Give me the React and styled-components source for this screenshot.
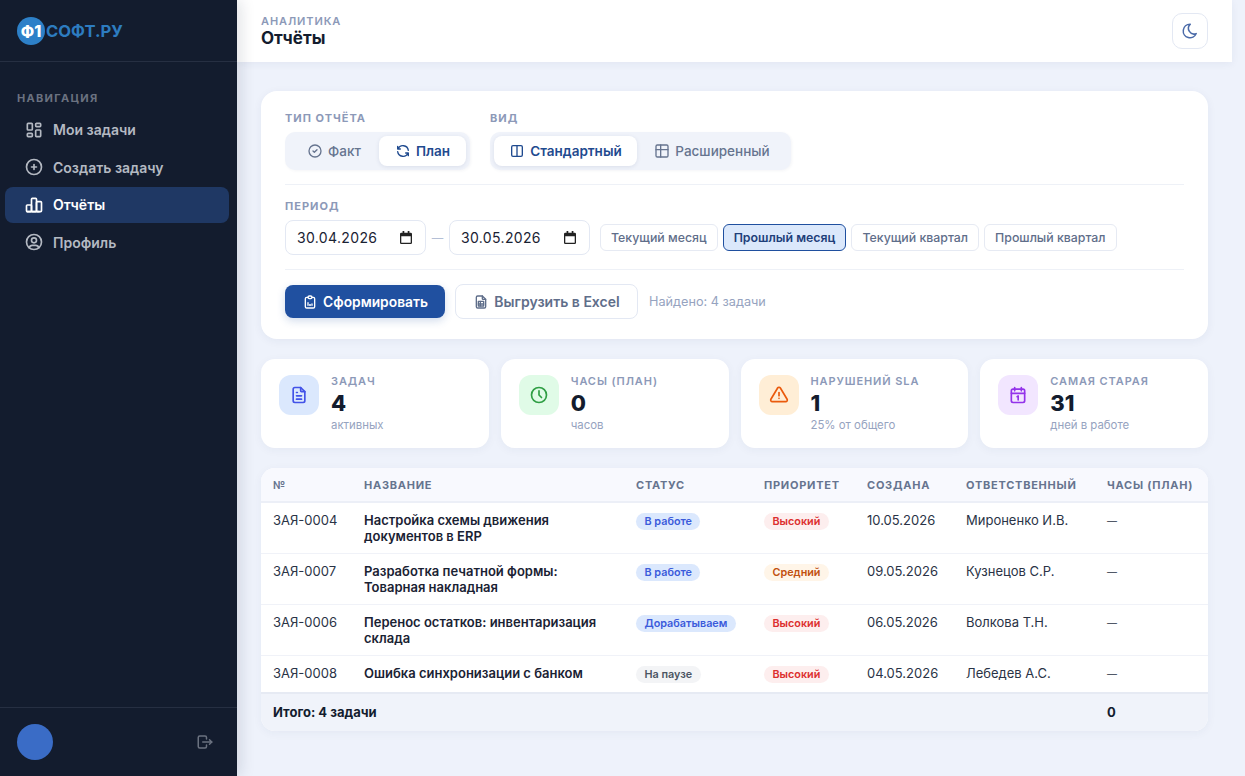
import React from "react";
import styled, { createGlobalStyle } from "styled-components";
import {
  TbLayoutDashboard,
  TbCirclePlus,
  TbChartBar,
  TbUserCircle,
  TbLogout,
  TbMoon,
  TbCircleCheck,
  TbRefresh,
  TbLayoutColumns,
  TbTable,
  TbClipboardData,
  TbFileSpreadsheet,
  TbFileText,
  TbClock,
  TbAlertTriangle,
} from "react-icons/tb";

const GlobalStyle = createGlobalStyle`
  html, body {
    margin: 0;
    height: 100%;
    overflow: hidden;
    background: #eef2fb;
  }
  body, button, input {
    font-family: Inter, "Noto Sans", sans-serif;
  }
`;

const Shell = styled.div`
  display: flex;
  height: 776px;
  padding-right: 13px;
  box-sizing: border-box;
`;

const Sidebar = styled.aside`
  flex: 0 0 237px;
  display: flex;
  flex-direction: column;
  background: #131c2e;
  box-shadow: 4px 0 14px rgba(19, 28, 46, 0.12);
  z-index: 2;
`;

const Brand = styled.div`
  height: 62px;
  box-sizing: border-box;
  display: flex;
  align-items: center;
  padding-left: 17px;
  border-bottom: 1px solid #262f42;
`;

const BrandMark = styled.span`
  width: 28px;
  height: 28px;
  border-radius: 50%;
  background: #2d80c8;
  color: #fff;
  font-size: 16px;
  font-weight: 800;
  display: flex;
  align-items: center;
  justify-content: center;
  margin-right: 1px;
`;

const BrandName = styled.span`
  color: #2d7cc0;
  font-size: 16.6px;
  font-weight: 700;
`;

const NavSection = styled.div`
  color: #6b7280;
  font-size: 11px;
  font-weight: 700;
  letter-spacing: 1.3px;
  padding: 29px 17px 6.5px;
  line-height: 14px;
`;

const NavList = styled.nav`
  display: flex;
  flex-direction: column;
  gap: 1.5px;
  padding: 0 8px 0 5px;
`;

const NavItem = styled.a`
  height: 36px;
  display: flex;
  align-items: center;
  gap: 9.5px;
  padding-left: 20px;
  border-radius: 8px;
  font-size: 14px;
  font-weight: 600;
  color: ${(p) => (p.$active ? "#ffffff" : "#b4b9c2")};
  background: ${(p) => (p.$active ? "#1f3864" : "transparent")};
  svg {
    font-size: 20px;
    flex: none;
    margin-left: -1.5px;
  }
`;

const SidebarFooter = styled.div`
  margin-top: auto;
  height: 69px;
  box-sizing: border-box;
  border-top: 1px solid #262f42;
  display: flex;
  align-items: center;
  justify-content: space-between;
  padding: 0 23px 0 17px;
  color: #6b7280;
  font-size: 18px;
`;

const Avatar = styled.div`
  width: 36px;
  height: 36px;
  border-radius: 50%;
  background: #3a6cc6;
`;

const Main = styled.div`
  flex: 1;
  min-width: 0;
  display: flex;
  flex-direction: column;
`;

const Topbar = styled.header`
  height: 62px;
  box-sizing: border-box;
  background: #fff;
  box-shadow: 0 2px 8px rgba(30, 50, 100, 0.06);
  display: flex;
  align-items: center;
  justify-content: space-between;
  padding: 0 24px;
`;

const Crumb = styled.div`
  font-size: 11px;
  font-weight: 600;
  letter-spacing: 0.9px;
  line-height: 14px;
  color: #8c99b8;
`;

const PageTitle = styled.h1`
  margin: 0;
  font-size: 17px;
  font-weight: 700;
  line-height: 20px;
  color: #131c2e;
`;

const ThemeButton = styled.button`
  width: 36px;
  height: 36px;
  border: 1px solid #e3e8f3;
  border-radius: 10px;
  background: #fff;
  color: #4a6aa8;
  font-size: 18px;
  display: flex;
  align-items: center;
  justify-content: center;
  padding: 0;
`;

const Content = styled.main`
  padding: 29px 24px;
  display: flex;
  flex-direction: column;
  gap: 20px;
`;

const FilterCard = styled.section`
  background: #fff;
  border-radius: 16px;
  box-shadow: 0 2px 10px rgba(30, 50, 100, 0.06);
  padding: 20px 24px;
  height: 248px;
  box-sizing: border-box;
`;

const FilterRow = styled.div`
  display: flex;
  gap: 20px;
  padding-bottom: 14px;
  border-bottom: 1px solid #eef1f7;
`;

const FieldLabel = styled.div`
  font-size: 11px;
  font-weight: 700;
  letter-spacing: 1px;
  line-height: 14px;
  color: #8c99b8;
  margin-bottom: 7px;
`;

const Segment = styled.div`
  display: flex;
  padding: 4px;
  background: #f0f3fa;
  border-radius: 10px;
  box-shadow: 1px 1px 3px rgba(30, 50, 100, 0.05);
`;

const SegmentButton = styled.button`
  width: ${(p) => p.$width}px;
  height: 30px;
  border: 0;
  padding: 0;
  border-radius: 8px;
  display: flex;
  align-items: center;
  justify-content: center;
  gap: 5px;
  font-size: 13.5px;
  font-weight: ${(p) => (p.$active ? 600 : 500)};
  color: ${(p) => (p.$active ? "#1f4a8f" : "#66748f")};
  background: ${(p) => (p.$active ? "#fff" : "transparent")};
  box-shadow: ${(p) => (p.$active ? "0 1px 4px rgba(30, 50, 100, 0.1)" : "none")};
  svg {
    font-size: 16px;
  }
`;

const PeriodRow = styled.div`
  padding: 14px 0 14px;
  border-bottom: 1px solid #eef1f7;
`;

const PeriodControls = styled.div`
  display: flex;
  align-items: center;
`;

const DateField = styled.div`
  width: 141px;
  height: 35px;
  box-sizing: border-box;
  border: 1px solid #e3e8f3;
  border-radius: 8px;
  display: flex;
  align-items: center;
  justify-content: space-between;
  padding: 0 13px 0 11px;
  font-size: 14px;
  letter-spacing: 0.35px;
  color: #1a2233;
`;

const DateDash = styled.span`
  width: 23px;
  text-align: center;
  color: #b4bfd6;
  font-size: 11.5px;
`;

const Presets = styled.div`
  display: flex;
  gap: 5px;
  margin-left: 10px;
`;

const PresetButton = styled.button`
  height: 27px;
  box-sizing: border-box;
  padding: 0 10px;
  border-radius: 6px;
  border: 1px solid ${(p) => (p.$active ? "#1f4f9f" : "#e6eaf3")};
  background: ${(p) => (p.$active ? "#dbe8fb" : "#fff")};
  color: ${(p) => (p.$active ? "#1f3f7a" : "#5f6e8a")};
  font-size: 12.35px;
  font-weight: ${(p) => (p.$active ? 600 : 500)};
`;

const ActionRow = styled.div`
  display: flex;
  align-items: center;
  padding-top: 14px;
`;

const PrimaryButton = styled.button`
  width: 160px;
  height: 33px;
  border: 0;
  border-radius: 8px;
  background: #2050a0;
  color: #fff;
  font-size: 13.8px;
  font-weight: 600;
  display: flex;
  align-items: center;
  justify-content: center;
  gap: 5px;
  box-shadow: 0 3px 8px rgba(32, 80, 160, 0.2);
  svg {
    font-size: 16px;
  }
`;

const SecondaryButton = styled.button`
  width: 183px;
  height: 35px;
  margin-left: 10px;
  border: 1px solid #e3e8f3;
  border-radius: 8px;
  background: #fff;
  color: #5f6e8a;
  font-size: 14px;
  font-weight: 600;
  display: flex;
  align-items: center;
  justify-content: center;
  gap: 5px;
  svg {
    font-size: 16px;
  }
`;

const FoundText = styled.span`
  margin-left: 11px;
  font-size: 12.7px;
  color: #96a3c0;
`;

const StatGrid = styled.section`
  display: grid;
  grid-template-columns: repeat(4, 1fr);
  gap: 12px;
`;

const StatCard = styled.div`
  height: 89px;
  box-sizing: border-box;
  background: #fff;
  border-radius: 14px;
  box-shadow: 0 2px 10px rgba(30, 50, 100, 0.05);
  padding: 16px 18px;
  display: flex;
  gap: 12px;
`;

const StatIcon = styled.div`
  width: 40px;
  height: 40px;
  flex: none;
  border-radius: 12px;
  background: ${(p) => p.$bg};
  color: ${(p) => p.$fg};
  display: flex;
  align-items: center;
  justify-content: center;
  font-size: 20px;
`;

const StatLabel = styled.div`
  font-size: 11px;
  font-weight: 600;
  letter-spacing: 0.9px;
  line-height: 13px;
  color: #8c99b8;
`;

const StatValue = styled.div`
  font-size: 22px;
  font-weight: 800;
  line-height: 27px;
  margin-top: 2px;
  color: #131c2e;
`;

const StatNote = styled.div`
  font-size: 11.4px;
  line-height: 16px;
  color: #96a3c0;
`;

const TableCard = styled.section`
  background: #fff;
  border-radius: 14px;
  overflow: hidden;
  box-shadow: 0 2px 10px rgba(30, 50, 100, 0.05);
`;

const Table = styled.table`
  width: 100%;
  table-layout: fixed;
  border-collapse: collapse;
`;

const HeadCell = styled.th`
  text-align: left;
  height: 33px;
  padding: 0 12px;
  background: #f8f9fe;
  border-bottom: 2px solid #eceff7;
  font-size: 11px;
  font-weight: 700;
  letter-spacing: 0.75px;
  color: #66748f;
  white-space: nowrap;
`;

const Row = styled.tr`
  border-bottom: 1px solid #f0f2f8;
  &:last-child {
    border-bottom: 0;
  }
`;

const Cell = styled.td`
  padding: 9px 12px;
  vertical-align: top;
  font-size: 13px;
  line-height: 16px;
  color: #2a3346;
`;

const TaskName = styled(Cell)`
  font-weight: 600;
  color: #1a2233;
`;

const Badge = styled.span`
  display: inline-block;
  height: 17px;
  line-height: 17px;
  margin-top: 1px;
  padding: 0 8.5px;
  border-radius: 9px;
  font-size: 10.8px;
  font-weight: 600;
  white-space: nowrap;
  vertical-align: top;
  background: ${(p) => p.$bg};
  color: ${(p) => p.$fg};
`;

const EmptyValue = styled.span`
  font-size: 10px;
`;

const FootCell = styled.td`
  height: 35px;
  padding: 0 12px 2px;
  background: #f0f3fa;
  border-top: 2px solid #e6eaf3;
  font-size: 13px;
  font-weight: 700;
  color: #131c2e;
`;

// the browser's own date-picker glyph, which has a solid top band
const DatePickerIcon = () => (
  <svg width="12" height="13" viewBox="0 0 14 15" fill="#222">
    <path d="M3 0h2v2h4V0h2v2h1.5A1.5 1.5 0 0 1 14 3.5v10a1.5 1.5 0 0 1-1.5 1.5h-11A1.5 1.5 0 0 1 0 13.5v-10A1.5 1.5 0 0 1 1.5 2H3V0zM1.5 6v7.5h11V6h-11z" />
  </svg>
);

const CalendarOneIcon = () => (
  <svg width="20" height="20" viewBox="0 0 24 24" fill="none" stroke="currentColor" strokeWidth="2" strokeLinecap="round" strokeLinejoin="round">
    <rect x="4" y="5" width="16" height="16" rx="2" />
    <path d="M16 3v4M8 3v4M4 10h16M11 14l1.2-.8V18" />
  </svg>
);

const statusColors = {
  "В работе": ["#dbe8fd", "#3b5bdb"],
  Дорабатываем: ["#dbe8fd", "#3b5bdb"],
  "На паузе": ["#f3f4f6", "#4b5563"],
};

const priorityColors = {
  Высокий: ["#fdeeee", "#dc2f2f"],
  Средний: ["#fff5e8", "#c2500f"],
};

const navItems = [
  { label: "Мои задачи", icon: TbLayoutDashboard },
  { label: "Создать задачу", icon: TbCirclePlus },
  { label: "Отчёты", icon: TbChartBar, active: true },
  { label: "Профиль", icon: TbUserCircle },
];

const stats = [
  { label: "ЗАДАЧ", value: "4", note: "активных", icon: TbFileText, bg: "#dbe8fd", fg: "#4353e8" },
  { label: "ЧАСЫ (ПЛАН)", value: "0", note: "часов", icon: TbClock, bg: "#e0fbe7", fg: "#2f9e44" },
  { label: "НАРУШЕНИЙ SLA", value: "1", note: "25% от общего", icon: TbAlertTriangle, bg: "#ffeed6", fg: "#ea5a0c" },
  { label: "САМАЯ СТАРАЯ", value: "31", note: "дней в работе", icon: CalendarOneIcon, bg: "#f2e6ff", fg: "#9333ea" },
];

const columns = [
  ["№", 91],
  ["НАЗВАНИЕ", 272],
  ["СТАТУС", 128],
  ["ПРИОРИТЕТ", 103],
  ["СОЗДАНА", 99],
  ["ОТВЕТСТВЕННЫЙ", 141],
  ["ЧАСЫ (ПЛАН)", 113],
];

const tasks = [
  { id: "ЗАЯ-0004", name: "Настройка схемы движения документов в ERP", status: "В работе", priority: "Высокий", created: "10.05.2026", owner: "Мироненко И.В." },
  { id: "ЗАЯ-0007", name: "Разработка печатной формы: Товарная накладная", status: "В работе", priority: "Средний", created: "09.05.2026", owner: "Кузнецов С.Р." },
  { id: "ЗАЯ-0006", name: "Перенос остатков: инвентаризация склада", status: "Дорабатываем", priority: "Высокий", created: "06.05.2026", owner: "Волкова Т.Н." },
  { id: "ЗАЯ-0008", name: "Ошибка синхронизации с банком", status: "На паузе", priority: "Высокий", created: "04.05.2026", owner: "Лебедев А.С." },
];

const presets = ["Текущий месяц", "Прошлый месяц", "Текущий квартал", "Прошлый квартал"];

const App = () => {
  return (
    <Shell>
      <GlobalStyle />
      <Sidebar>
        <Brand>
          <BrandMark>Ф1</BrandMark>
          <BrandName>СОФТ.РУ</BrandName>
        </Brand>
        <NavSection>НАВИГАЦИЯ</NavSection>
        <NavList>
          {navItems.map(({ label, icon: Icon, active }) => (
            <NavItem key={label} $active={active}>
              <Icon />
              {label}
            </NavItem>
          ))}
        </NavList>
        <SidebarFooter>
          <Avatar />
          <TbLogout />
        </SidebarFooter>
      </Sidebar>
      <Main>
        <Topbar>
          <div>
            <Crumb>АНАЛИТИКА</Crumb>
            <PageTitle>Отчёты</PageTitle>
          </div>
          <ThemeButton>
            <TbMoon />
          </ThemeButton>
        </Topbar>
        <Content>
          <FilterCard>
            <FilterRow>
              <div>
                <FieldLabel>ТИП ОТЧЁТА</FieldLabel>
                <Segment>
                  <SegmentButton $width={90}>
                    <TbCircleCheck />
                    Факт
                  </SegmentButton>
                  <SegmentButton $width={87} $active>
                    <TbRefresh />
                    План
                  </SegmentButton>
                </Segment>
              </div>
              <div>
                <FieldLabel>ВИД</FieldLabel>
                <Segment>
                  <SegmentButton $width={143} $active>
                    <TbLayoutColumns />
                    Стандартный
                  </SegmentButton>
                  <SegmentButton $width={150}>
                    <TbTable />
                    Расширенный
                  </SegmentButton>
                </Segment>
              </div>
            </FilterRow>
            <PeriodRow>
              <FieldLabel>ПЕРИОД</FieldLabel>
              <PeriodControls>
                <DateField>
                  30.04.2026
                  <DatePickerIcon />
                </DateField>
                <DateDash>—</DateDash>
                <DateField>
                  30.05.2026
                  <DatePickerIcon />
                </DateField>
                <Presets>
                  {presets.map((p) => (
                    <PresetButton key={p} $active={p === "Прошлый месяц"}>
                      {p}
                    </PresetButton>
                  ))}
                </Presets>
              </PeriodControls>
            </PeriodRow>
            <ActionRow>
              <PrimaryButton>
                <TbClipboardData />
                Сформировать
              </PrimaryButton>
              <SecondaryButton>
                <TbFileSpreadsheet />
                Выгрузить в Excel
              </SecondaryButton>
              <FoundText>Найдено: 4 задачи</FoundText>
            </ActionRow>
          </FilterCard>

          <StatGrid>
            {stats.map(({ label, value, note, icon: Icon, bg, fg }) => (
              <StatCard key={label}>
                <StatIcon $bg={bg} $fg={fg}>
                  <Icon />
                </StatIcon>
                <div>
                  <StatLabel>{label}</StatLabel>
                  <StatValue>{value}</StatValue>
                  <StatNote>{note}</StatNote>
                </div>
              </StatCard>
            ))}
          </StatGrid>

          <TableCard>
            <Table>
              <colgroup>
                {columns.map(([title, width]) => (
                  <col key={title} width={width} />
                ))}
              </colgroup>
              <thead>
                <tr>
                  {columns.map(([title]) => (
                    <HeadCell key={title}>{title}</HeadCell>
                  ))}
                </tr>
              </thead>
              <tbody>
                {tasks.map((t) => {
                  const [sBg, sFg] = statusColors[t.status];
                  const [pBg, pFg] = priorityColors[t.priority];
                  return (
                    <Row key={t.id}>
                      <Cell>{t.id}</Cell>
                      <TaskName>{t.name}</TaskName>
                      <Cell>
                        <Badge $bg={sBg} $fg={sFg}>{t.status}</Badge>
                      </Cell>
                      <Cell>
                        <Badge $bg={pBg} $fg={pFg}>{t.priority}</Badge>
                      </Cell>
                      <Cell>{t.created}</Cell>
                      <Cell>{t.owner}</Cell>
                      <Cell>
                        <EmptyValue>—</EmptyValue>
                      </Cell>
                    </Row>
                  );
                })}
              </tbody>
              <tfoot>
                <tr>
                  <FootCell colSpan={6}>Итого: 4 задачи</FootCell>
                  <FootCell>0</FootCell>
                </tr>
              </tfoot>
            </Table>
          </TableCard>
        </Content>
      </Main>
    </Shell>
  );
};

export default App;
